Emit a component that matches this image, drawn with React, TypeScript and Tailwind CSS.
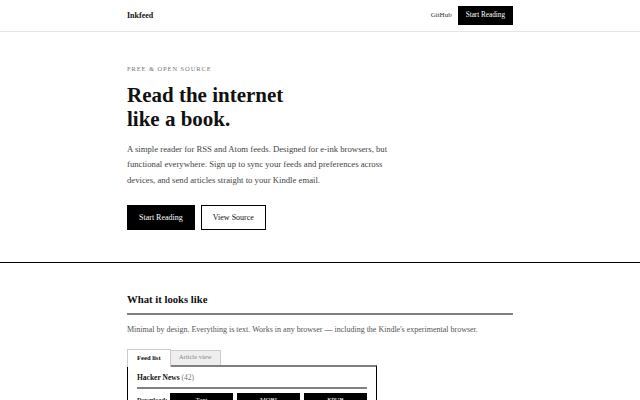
import React from "react";

export default function App() {
  return (
    <div className="min-h-[400px] bg-white text-[#111]" style={{ fontFamily: '"Liberation Serif", "Times New Roman", serif' }}>
      <header className="h-[32px] border-b border-[#e5e5e5]">
        <div className="w-[386px] mx-auto h-[31px] flex items-center justify-between">
          <span className="text-[8px] font-bold">Inkfeed</span>
          <div className="flex items-center gap-[6px]">
            <span className="text-[7px] text-[#333]">GitHub</span>
            <span className="bg-black text-white text-[7.2px] h-[19px] px-[8px] flex items-center">Start Reading</span>
          </div>
        </div>
      </header>

      <section className="border-b border-black pt-[33px] pb-[32px]">
        <div className="w-[386px] mx-auto">
          <div className="text-[6.5px] leading-[8px] tracking-[0.9px] text-[#777]">FREE &amp; OPEN SOURCE</div>
          <h1 className="mt-[10px] text-[21px] leading-[24px] font-bold text-[#111]">
            Read the internet
            <br />
            like a book.
          </h1>
          <p className="mt-[10.5px] w-[268px] text-[8.7px] leading-[15.5px] text-[#444]">
            A simple reader for RSS and Atom feeds. Designed for e-ink browsers, but functional everywhere. Sign up to sync your feeds and preferences across devices, and send articles straight to your Kindle email.
          </p>
          <div className="mt-[17px] flex gap-[6px]">
            <span className="bg-black text-white text-[8px] h-[25px] px-[12px] flex items-center">Start Reading</span>
            <span className="border border-black text-[#111] text-[8px] h-[25px] px-[11px] flex items-center">View Source</span>
          </div>
        </div>
      </section>

      <section className="pt-[30px]">
        <div className="w-[386px] mx-auto">
          <h2 className="text-[10.7px] leading-[13px] font-bold pb-[6.5px] border-b-2 border-[#808080]">What it looks like</h2>
          <p className="mt-[9px] text-[8px] leading-[12px] text-[#555]">
            Minimal by design. Everything is text. Works in any browser — including the Kindle's experimental browser.
          </p>
          <div className="mt-[13px] w-[250px]">
            <div className="flex items-end">
              <div className="relative z-10 -mb-[2px] h-[18px] px-[9px] flex items-center bg-white border-t border-x border-[#ccc] text-[6.6px] font-bold">
                Feed list
              </div>
              <div className="h-[15px] px-[8px] flex items-center bg-[#eee] border-t border-r border-[#ccc] text-[6.7px] text-[#888]">
                Article view
              </div>
            </div>
            <div className="border-t-2 border-t-[#808080] border-x border-x-black px-[9px] pt-[6px]">
              <div className="text-[7.5px] leading-[10px] pb-[4px] border-b-2 border-[#808080]">
                <span className="font-bold">Hacker News</span> <span className="text-[#777]">(42)</span>
              </div>
              <div className="mt-[4.5px] flex items-center gap-[4px]">
                <span className="w-[29px] text-[6.5px] font-bold">Download:</span>
                <span className="flex-1 h-[14px] bg-black text-white text-[6.5px] flex items-center justify-center">Text</span>
                <span className="flex-1 h-[14px] bg-black text-white text-[6.5px] flex items-center justify-center">MOBI</span>
                <span className="flex-1 h-[14px] bg-black text-white text-[6.5px] flex items-center justify-center">EPUB</span>
              </div>
            </div>
          </div>
        </div>
      </section>
    </div>
  );
}
